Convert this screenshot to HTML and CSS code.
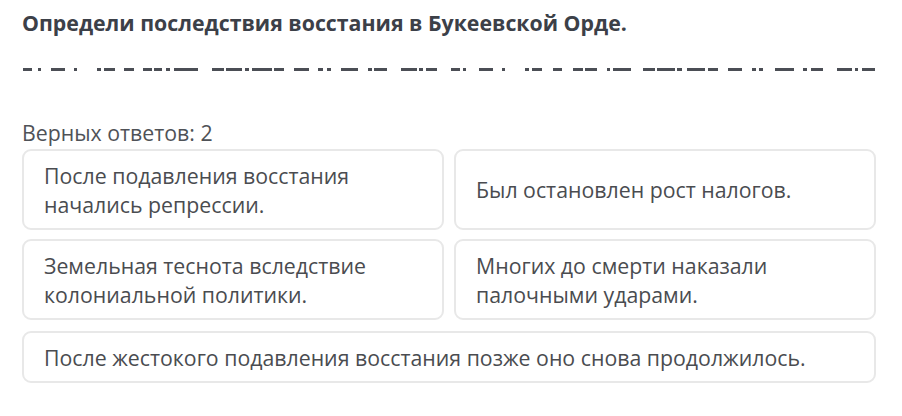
FILE: index.html
```html
<!DOCTYPE html>
<html lang="ru">
<head>
<meta charset="utf-8">
<link rel="stylesheet" href="styles.css">
</head>
<body>
<div class="page">
  <h1 class="title">Определи последствия восстания в Букеевской Орде.</h1>
  <div class="dashes">
    <svg width="860" height="4" viewBox="0 0 860 4" xmlns="http://www.w3.org/2000/svg" fill="#4b4e55">
      <rect x="1" y="0" width="9" height="3"/><rect x="16" y="0" width="3" height="3"/><rect x="29" y="0" width="14" height="3"/><rect x="52" y="0" width="3" height="3"/>
      <rect x="75" y="0" width="4" height="3"/><rect x="82" y="0" width="11" height="3"/><rect x="102" y="0" width="10" height="3"/><rect x="121" y="0" width="9" height="3"/><rect x="132" y="0" width="8" height="3"/><rect x="144" y="0" width="4" height="3"/><rect x="152" y="0" width="24" height="3"/>
      <rect x="190" y="0" width="12" height="3"/><rect x="204" y="0" width="16" height="3"/><rect x="223" y="0" width="4" height="3"/><rect x="230" y="0" width="20" height="3"/><rect x="252" y="0" width="10" height="3"/><rect x="272" y="0" width="15" height="3"/>
      <rect x="296" y="0" width="5" height="3"/><rect x="305" y="0" width="4" height="3"/><rect x="319" y="0" width="17" height="3"/><rect x="346" y="0" width="4" height="3"/><rect x="352" y="0" width="13" height="3"/>
      <rect x="379" y="0" width="16" height="3"/><rect x="397" y="0" width="4" height="3"/><rect x="404" y="0" width="11" height="3"/>
      <rect x="429" y="0" width="9" height="3"/><rect x="441" y="0" width="3" height="3"/><rect x="457" y="0" width="14" height="3"/><rect x="480" y="0" width="3" height="3"/>
      <rect x="503" y="0" width="4" height="3"/><rect x="510" y="0" width="10" height="3"/><rect x="531" y="0" width="9" height="3"/><rect x="551" y="0" width="10" height="3"/><rect x="563" y="0" width="12" height="3"/><rect x="585" y="0" width="3" height="3"/><rect x="591" y="0" width="18" height="3"/>
      <rect x="621" y="0" width="12" height="3"/><rect x="635" y="0" width="18" height="3"/><rect x="655" y="0" width="5" height="3"/><rect x="665" y="0" width="18" height="3"/><rect x="686" y="0" width="10" height="3"/>
      <rect x="706" y="0" width="14" height="3"/><rect x="730" y="0" width="4" height="3"/><rect x="737" y="0" width="4" height="3"/><rect x="753" y="0" width="19" height="3"/><rect x="781" y="0" width="4" height="3"/><rect x="789" y="0" width="12" height="3"/>
      <rect x="815" y="0" width="15" height="3"/><rect x="833" y="0" width="3" height="3"/><rect x="840" y="0" width="13" height="3"/>
    </svg>
  </div>
  <p class="count">Верных ответов: 2</p>
  <div class="grid">
    <div class="card">После подавления восстания начались репрессии.</div>
    <div class="card">Был остановлен рост налогов.</div>
    <div class="card">Земельная теснота вследствие колониальной политики.</div>
    <div class="card">Многих до смерти наказали палочными ударами.</div>
    <div class="card wide">После жестокого подавления восстания позже оно снова продолжилось.</div>
  </div>
</div>
</body>
</html>
```

FILE: styles.css
```css
html, body {
  margin: 0;
  padding: 0;
  background: #ffffff;
}
body {
  font-family: "Open Sans", "Noto Sans", sans-serif;
  width: 902px;
  height: 416px;
  overflow: hidden;
}
.page {
  padding: 9px 26px 0 22px;
}
.title {
  margin: 0;
  font-size: 21.3px;
  font-weight: 700;
  line-height: 28px;
  color: #3c4048;
}
.dashes {
  margin-top: 31px;
  height: 4px;
  line-height: 0;
}
.dashes svg {
  display: block;
}
.count {
  margin: 48px 0 0 0;
  font-size: 21.3px;
  line-height: 26px;
  color: #4f5257;
}
.grid {
  display: grid;
  grid-template-columns: 1fr 1fr;
  column-gap: 10px;
  row-gap: 9px;
  margin-top: 3px;
}
.card {
  border: 2px solid #e8e8e8;
  border-radius: 9px;
  min-height: 81px;
  box-sizing: border-box;
  padding: 9px 20px;
  display: flex;
  align-items: center;
  font-size: 21.3px;
  line-height: 29px;
  color: #4a4c50;
}
.card.wide {
  grid-column: 1 / 3;
  min-height: 52px;
  margin-top: 2px;
}
```
